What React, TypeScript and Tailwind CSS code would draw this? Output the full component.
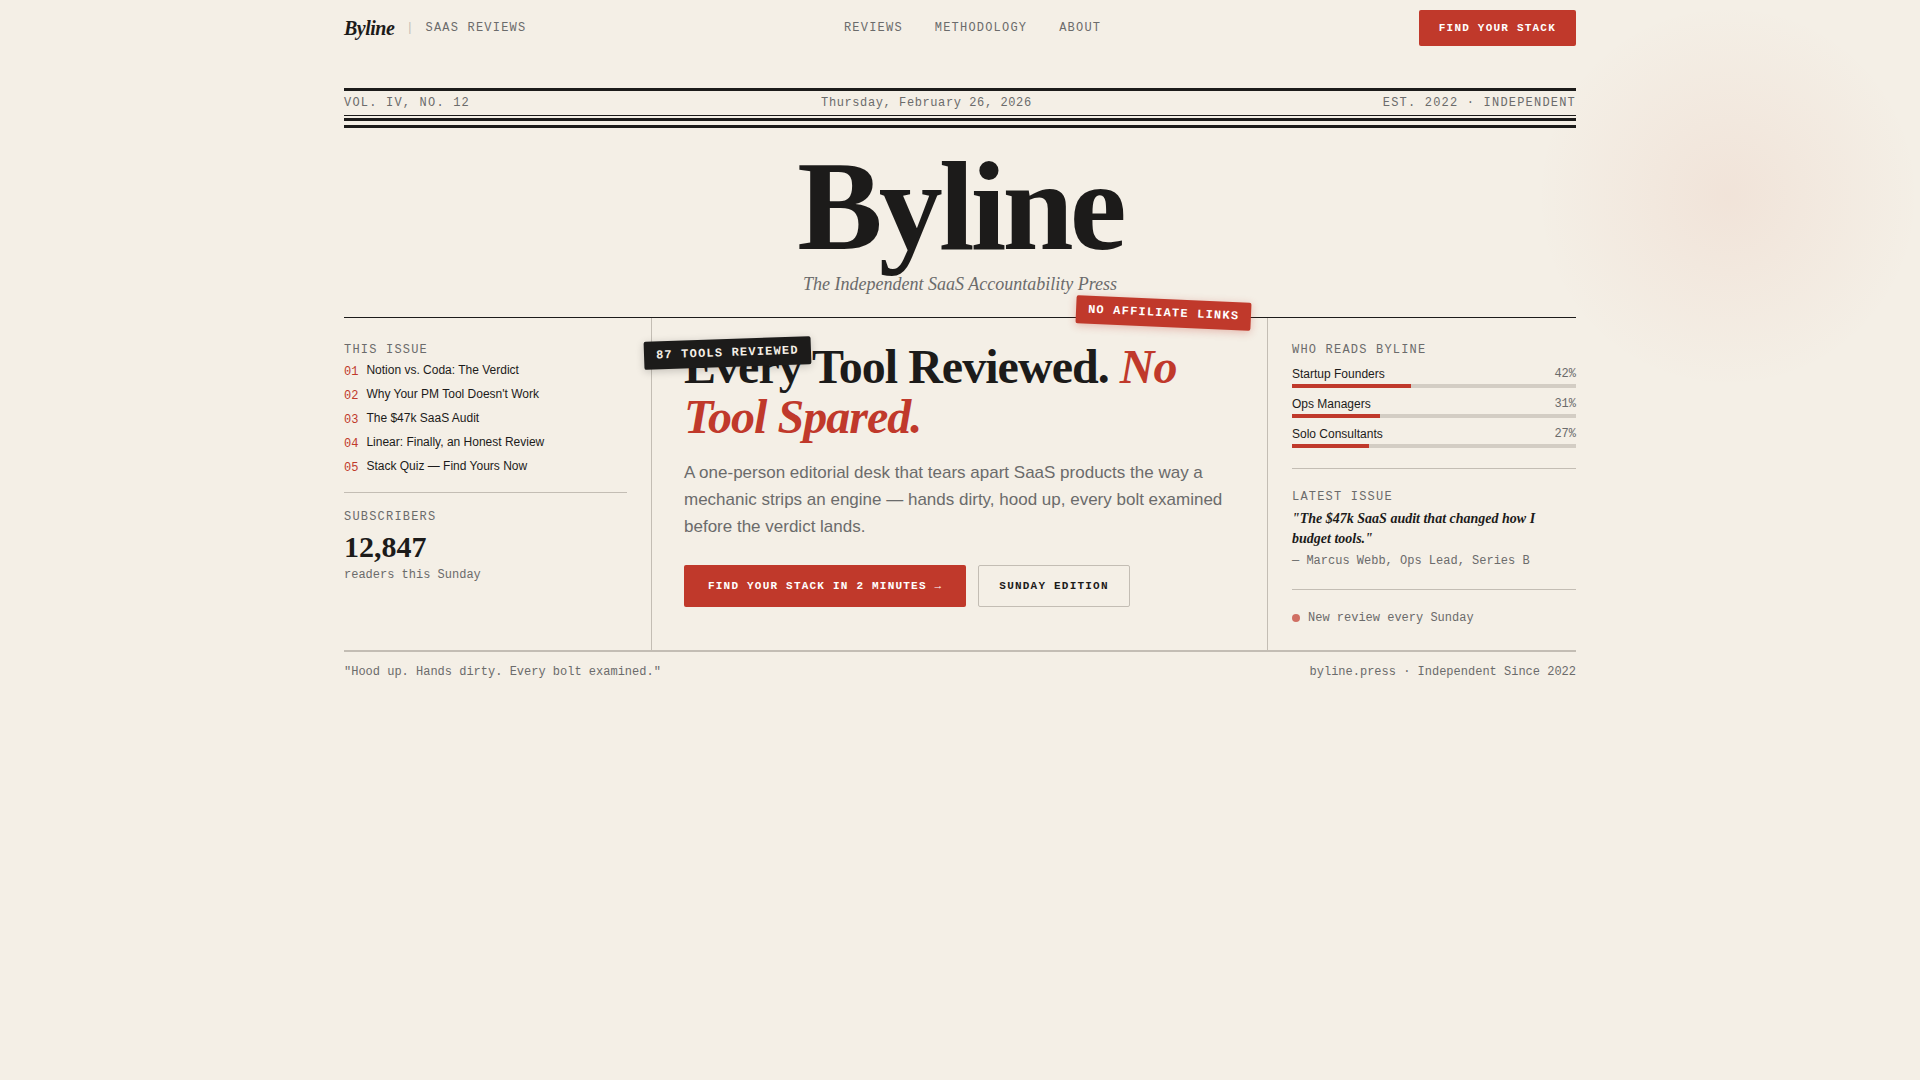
import type { ReactNode } from "react";
import { clsx } from "clsx";

const NAV_LINKS = [
  { href: "#reviews", label: "Reviews" },
  { href: "#methodology", label: "Methodology" },
  { href: "#about", label: "About" },
] as const;

const ISSUE_ITEMS = [
  "Notion vs. Coda: The Verdict",
  "Why Your PM Tool Doesn't Work",
  "The $47k SaaS Audit",
  "Linear: Finally, an Honest Review",
  "Stack Quiz — Find Yours Now",
];

const READERS = [
  { label: "Startup Founders", percent: 42 },
  { label: "Ops Managers", percent: 31 },
  { label: "Solo Consultants", percent: 27 },
];

const SERIF = "font-['Liberation_Serif',serif]";
const MONO = "font-['Liberation_Mono',monospace]";

interface WithChildren {
  children: ReactNode;
  className?: string;
}

function Label({ children, className }: WithChildren) {
  return (
    <h2 className={clsx(MONO, "text-xs uppercase tracking-widest text-[#6b6b6b]", className)}>
      {children}
    </h2>
  );
}

function Stamp({ children, className }: WithChildren) {
  return (
    <span
      className={clsx(
        MONO,
        "absolute z-10 whitespace-nowrap rounded-xs px-3 py-1.5 text-xs font-bold uppercase tracking-widest",
        className,
      )}
    >
      {children}
    </span>
  );
}

function Button({ children, className }: WithChildren) {
  return (
    <button
      type="button"
      className={clsx(
        MONO,
        "cursor-pointer rounded-xs text-[11px] font-bold uppercase tracking-[0.11em]",
        className,
      )}
    >
      {children}
    </button>
  );
}

function TopNav() {
  return (
    <header className="flex h-14 items-center justify-between">
      <div className="flex items-center gap-3">
        <a href="#top" className={clsx(SERIF, "text-xl font-bold italic tracking-tight")}>
          Byline
        </a>
        <span className={clsx(MONO, "text-xs text-[#c3bdb4]")}>|</span>
        <span className={clsx(MONO, "text-xs uppercase tracking-widest text-[#6b6b6b]")}>
          SaaS Reviews
        </span>
      </div>
      <nav className="flex items-center gap-8">
        {NAV_LINKS.map((link) => (
          <a
            key={link.href}
            href={link.href}
            className={clsx(MONO, "text-xs uppercase tracking-widest text-[#6b6b6b]")}
          >
            {link.label}
          </a>
        ))}
      </nav>
      <Button className="h-9 bg-[#c0392b] px-5 text-white">Find Your Stack</Button>
    </header>
  );
}

function Masthead() {
  return (
    <div className="mt-8 border-b border-[#1c1b1a] text-center">
      <div
        className={clsx(
          MONO,
          "flex justify-between border-t-3 border-b border-[#1c1b1a] py-1 text-xs text-[#6b6b6b]",
        )}
      >
        <span className="tracking-widest">VOL. IV, NO. 12</span>
        <span className="tracking-wider">Thursday, February 26, 2026</span>
        <span className="tracking-widest">EST. 2022 · INDEPENDENT</span>
      </div>
      <div className="mt-0.5 h-2.5 border-y-3 border-[#1c1b1a]" />
      <h1
        className={clsx(SERIF, "mt-5 text-[128px] font-bold leading-[117px] tracking-[-0.03em]")}
      >
        Byline
      </h1>
      <p className={clsx(SERIF, "mt-1.5 mb-5 text-lg leading-[26px] italic text-[#6b6b6b]")}>
        The Independent SaaS Accountability Press
      </p>
    </div>
  );
}

function IssueColumn() {
  return (
    <aside className="border-r border-[#c3bdb4] py-6 pr-6">
      <Label className="mb-0.5">This Issue</Label>
      <ol>
        {ISSUE_ITEMS.map((title, i) => (
          <li key={title} className="flex gap-2 text-xs">
            <span className={clsx(MONO, "leading-6 text-[#c0392b]")}>0{i + 1}</span>
            <a href="#reviews" className="leading-5">
              {title}
            </a>
          </li>
        ))}
      </ol>
      <div className="mt-3 border-t border-[#c3bdb4] pt-4">
        <Label className="mb-0.5">Subscribers</Label>
        <p className={clsx(SERIF, "text-3xl leading-10 font-bold")}>12,847</p>
        <p className={clsx(MONO, "text-xs text-[#6b6b6b]")}>readers this Sunday</p>
      </div>
    </aside>
  );
}

function Lead() {
  return (
    <section className="relative border-r border-[#c3bdb4] px-8 py-6">
      <Stamp className="top-[21px] -left-2 -rotate-2 bg-[#1c1b1a] text-[#f4efe6] shadow-[0_2px_8px_rgba(0,0,0,0.2)]">
        87 Tools Reviewed
      </Stamp>
      <Stamp className="-top-[19px] right-4 rotate-[2.5deg] bg-[#c0392b] text-white shadow-[0_2px_8px_rgba(192,57,43,0.3)]">
        No Affiliate Links
      </Stamp>
      <h2 className={clsx(SERIF, "text-5xl leading-[50px] font-bold tracking-[-0.02em]")}>
        Every Tool Reviewed. <em className="text-[#c0392b]">No Tool Spared.</em>
      </h2>
      <p className="mt-[17px] text-[17px] leading-[27px] text-[#6b6b6b]">
        A one-person editorial desk that tears apart SaaS products the way a mechanic strips an
        engine — hands dirty, hood up, every bolt examined before the verdict lands.
      </p>
      <div className="mt-[25px] flex flex-wrap gap-3">
        <Button className="h-[42px] bg-[#c0392b] px-6 text-white">
          Find Your Stack in 2 Minutes →
        </Button>
        <Button className="h-[42px] border border-[#c3bdb4] px-5">Sunday Edition</Button>
      </div>
    </section>
  );
}

function ReadersColumn() {
  return (
    <aside className="py-6 pl-6">
      <Label className="mb-1.5">Who Reads Byline</Label>
      <ul className="flex flex-col gap-1.5">
        {READERS.map((reader) => (
          <li key={reader.label}>
            <div className="flex justify-between text-xs leading-5">
              <span>{reader.label}</span>
              <span className={clsx(MONO, "text-[#6b6b6b]")}>{reader.percent}%</span>
            </div>
            <div className="h-1 bg-[#d3cdc4]">
              <div className="h-full bg-[#c0392b]" style={{ width: `${reader.percent}%` }} />
            </div>
          </li>
        ))}
      </ul>
      <div className="mt-5 border-t border-[#c3bdb4] pt-5">
        <Label className="mb-1">Latest Issue</Label>
        <blockquote className={clsx(SERIF, "text-sm leading-5 font-bold italic")}>
          "The $47k SaaS audit that changed how I budget tools."
        </blockquote>
        <p className={clsx(MONO, "mt-1 text-xs text-[#6b6b6b]")}>
          — Marcus Webb, Ops Lead, Series B
        </p>
      </div>
      <div className="mt-5 flex items-center gap-2 border-t border-[#c3bdb4] pt-5">
        <span className="size-2 rounded-full bg-[#c0392b]/70" />
        <span className={clsx(MONO, "text-xs text-[#6b6b6b]")}>New review every Sunday</span>
      </div>
    </aside>
  );
}

export default function App() {
  return (
    <div
      id="top"
      className="relative min-h-screen overflow-hidden bg-[#f4efe6] font-['Liberation_Sans',sans-serif] text-[#1c1b1a]"
    >
      {/* warm glow behind the top right corner */}
      <div className="pointer-events-none absolute top-1 right-0 size-96 bg-[radial-gradient(closest-side,rgba(200,75,43,0.07),transparent)]" />
      <div className="relative mx-auto max-w-7xl px-6">
        <TopNav />
        <main>
          <Masthead />
          <div className="grid grid-cols-[1fr_2fr_1fr] border-b-2 border-[#c3bdb4]">
            <IssueColumn />
            <Lead />
            <ReadersColumn />
          </div>
        </main>
        <footer className={clsx(MONO, "flex justify-between py-3 text-xs text-[#6b6b6b]")}>
          <span>"Hood up. Hands dirty. Every bolt examined."</span>
          <span>byline.press · Independent Since 2022</span>
        </footer>
      </div>
    </div>
  );
}
